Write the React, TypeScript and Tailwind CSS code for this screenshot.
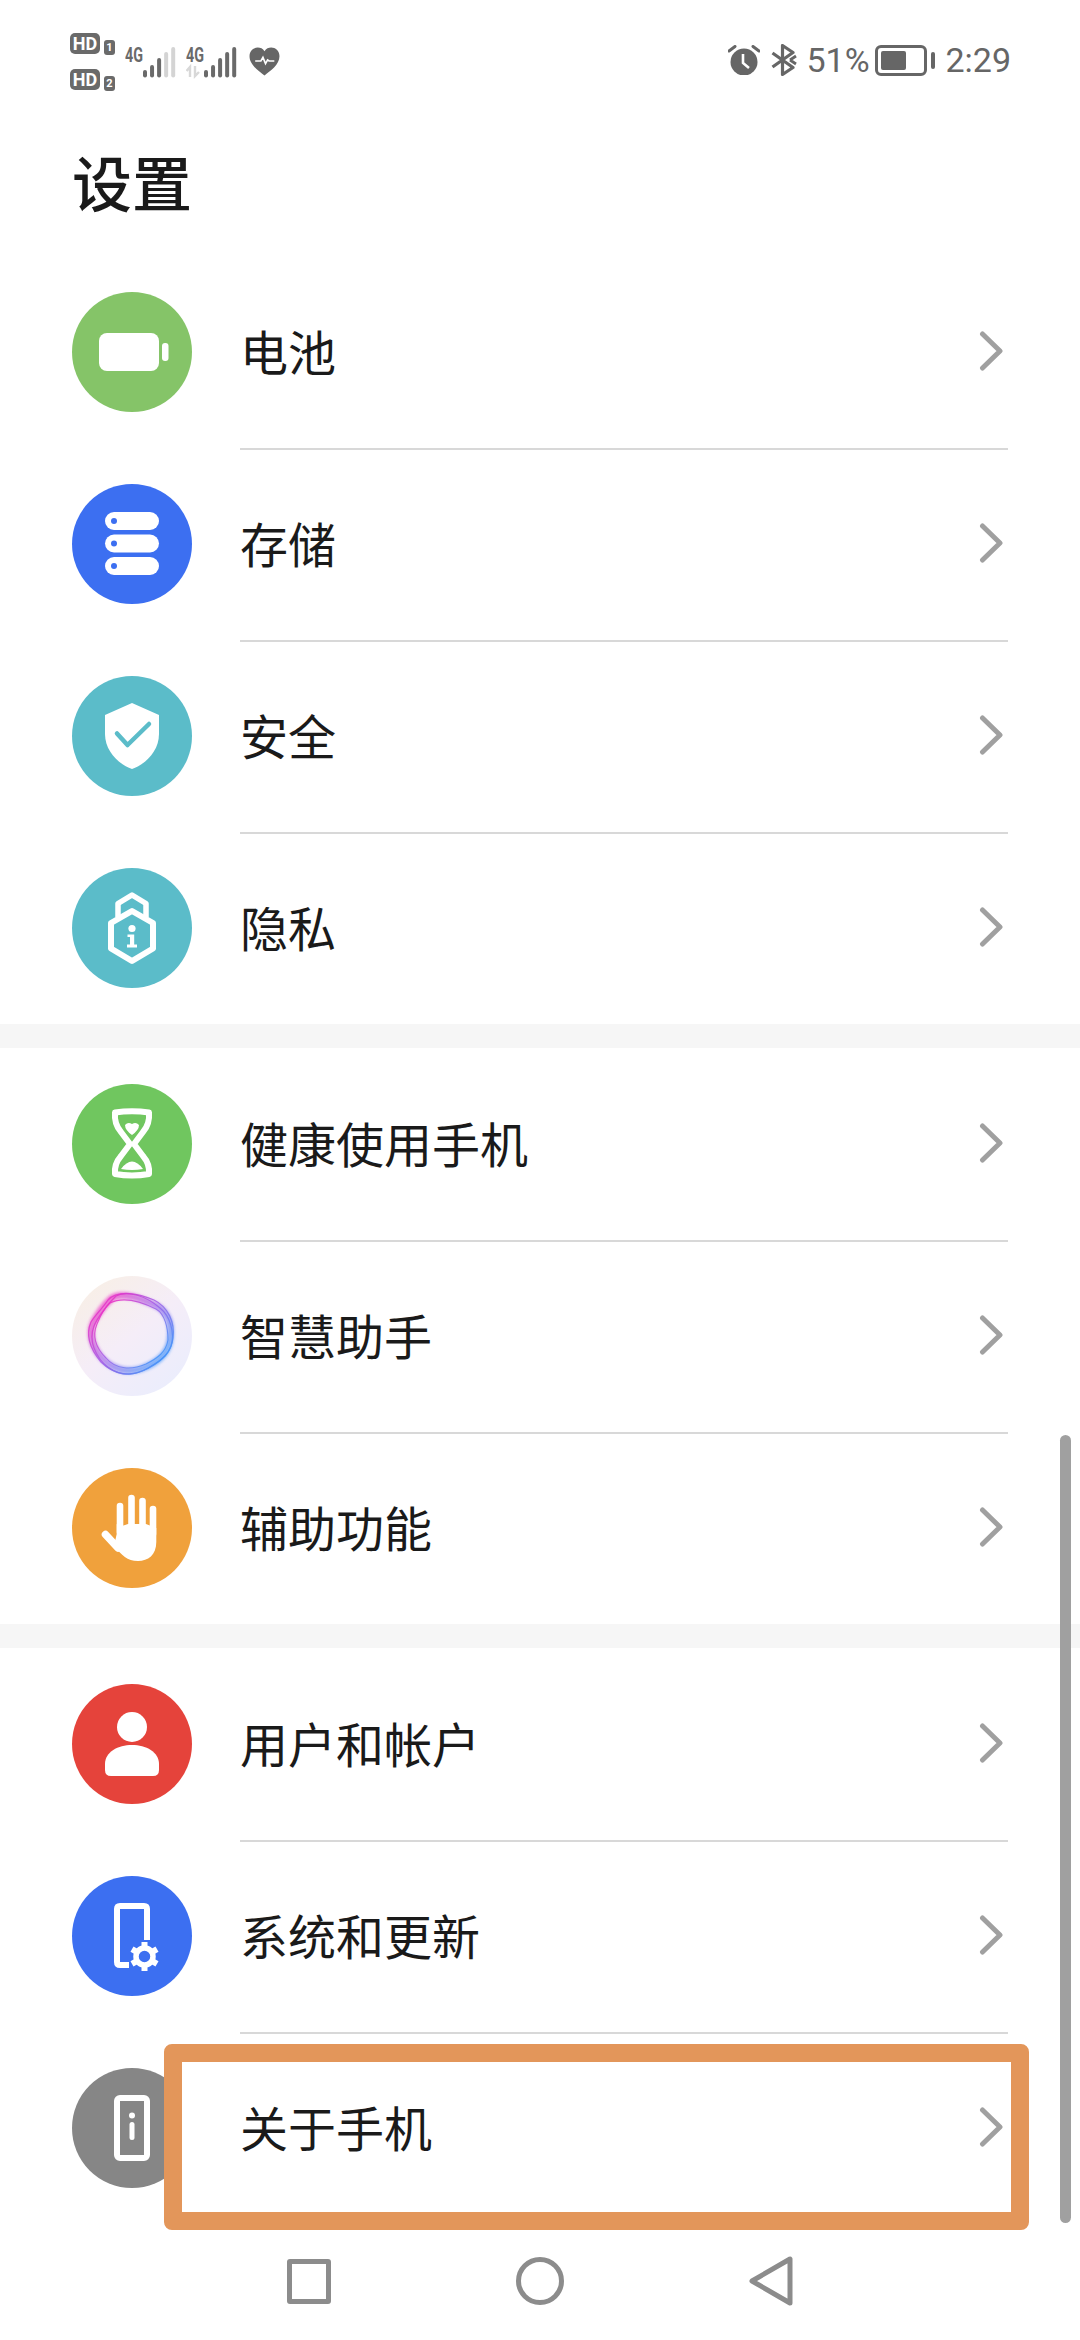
import React from "react";

const Circle = ({ bg, children }: { bg: string; children: React.ReactNode }) => (
  <svg viewBox="0 0 120 120" className="w-[120px] h-[120px] shrink-0 block">
    <circle cx="60" cy="60" r="60" fill={bg} />
    {children}
  </svg>
);

const Battery = () => (
  <Circle bg="#85c468">
    <rect x="27" y="41" width="60" height="38" rx="8" fill="#fff" />
    <rect x="90" y="51" width="6.5" height="18" rx="3" fill="#fff" />
  </Circle>
);

const Storage = () => (
  <Circle bg="#3c6ff1">
    {[28, 50.5, 73].map((y) => (
      <g key={y}>
        <rect x="33" y={y} width="54" height="18" rx="9" fill="#fff" />
        <circle cx="42" cy={y + 9} r="3" fill="#3c6ff1" />
      </g>
    ))}
  </Circle>
);

const Shield = () => (
  <Circle bg="#5bbcc9">
    <path d="M60 27 L87 39 V58 C87 76 72 89 60 93 C48 89 33 76 33 58 V39 Z" fill="#fff" />
    <path d="M45 57.5 L55.5 69 L77 48" fill="none" stroke="#5bbcc9" strokeWidth="4.5" strokeLinecap="round" strokeLinejoin="round" />
  </Circle>
);

const Privacy = () => (
  <Circle bg="#5bbcc9">
    <path d="M60 43 L81 55 V80.5 L60 93 L39 80.5 V55 Z" fill="none" stroke="#fff" strokeWidth="6" strokeLinejoin="round" />
    <path d="M46 49 V35.5 L60 27 L74 35.5 V49" fill="none" stroke="#fff" strokeWidth="5.5" strokeLinejoin="round" />
    <circle cx="60" cy="60.5" r="3.6" fill="#fff" />
    <path d="M55.5 66.5 H62.2 V76.5 H65 V79.5 H55 V76.5 H58 V69 H55.5 Z" fill="#fff" />
  </Circle>
);

const Hourglass = () => (
  <Circle bg="#70c65f">
    <path
      d="M43 28.5 Q60 26 77 28.5 Q78 40 71 48 L62 60 L71 72 Q78 80 77 90 Q60 93 43 90 Q42 80 49 72 L58 60 L49 48 Q42 40 43 28.5 Z"
      fill="none"
      stroke="#fff"
      strokeWidth="6"
      strokeLinejoin="round"
    />
    <path d="M53 41 Q56 37.5 60 40 Q64 37.5 67 41 Q67 46 60 51 Q53 46 53 41 Z" fill="#fff" />
    <path d="M49 85 Q60 70 71 85 Q60 87 49 85 Z" fill="#fff" />
  </Circle>
);

const Assistant = () => (
  <svg viewBox="0 0 120 120" className="w-[120px] h-[120px] shrink-0 block">
    <defs>
      <linearGradient id="bgA" x1="0.1" y1="0" x2="0.9" y2="1">
        <stop offset="0" stopColor="#f8efe4" />
        <stop offset="0.5" stopColor="#f5edf8" />
        <stop offset="1" stopColor="#e9edfd" />
      </linearGradient>
      <linearGradient id="ring" x1="0.1" y1="0.15" x2="0.9" y2="0.85">
        <stop offset="0" stopColor="#ec2fc4" />
        <stop offset="0.45" stopColor="#a45ce6" />
        <stop offset="1" stopColor="#3f97fa" />
      </linearGradient>
      <filter id="soft" x="-20%" y="-20%" width="140%" height="140%">
        <feGaussianBlur stdDeviation="1.8" />
      </filter>
    </defs>
    <circle cx="60" cy="60" r="60" fill="url(#bgA)" />
    <g fill="none" stroke="url(#ring)">
      <path filter="url(#soft)" strokeWidth="7" opacity="0.65" d="M40 22 C52 15 72 24 85 30 C97 37 100 50 98 64 C96 78 84 88 68 93 C54 97 40 93 30 82 C20 71 16 57 22 45 C27 36 33 28 40 22 Z" />
      <path strokeWidth="1.3" opacity="0.85" d="M36 24 C46 13 68 18 82 24 C96 31 103 46 101 62 C99 78 90 84 76 92 C60 102 42 99 29 86 C19 74 13 60 19 46 C24 38 30 33 36 24 Z" />
      <path strokeWidth="1.3" opacity="0.85" d="M44 20 C56 14 74 20 88 32 C98 40 103 56 99 70 C94 84 74 96 58 98 C42 99 28 88 22 72 C16 56 24 44 32 34 C36 28 40 24 44 20 Z" />
      <path strokeWidth="1.1" opacity="0.85" d="M38 27 C52 20 70 26 84 33 C93 38 96 52 96 64 C94 76 86 82 74 88 C60 94 44 94 34 82 C24 72 20 60 25 48 C29 38 32 32 38 27 Z" />
    </g>
  </svg>
);

const Hand = () => (
  <Circle bg="#f0a13c">
    <g stroke="#fff" strokeWidth="6.6" strokeLinecap="round" fill="none">
      <path d="M48 38 V64" />
      <path d="M59.5 30 V60" />
      <path d="M70.5 33 V60" />
      <path d="M81 41 V66" />
      <path d="M33.5 66.5 L46 80" strokeWidth="7.5" />
    </g>
    <path d="M44.7 56 L47 59 L56 56 H63 H74 L84.3 60 V74 C84.3 87 76 93 66 93 C55 93 50 87 42 78 L44.7 66 Z" fill="#fff" />
    <g stroke="#f0a13c" strokeWidth="1.6">
      <path d="M53.8 36 V56" />
      <path d="M65 36 V56" />
      <path d="M75.8 40 V56" />
    </g>
  </Circle>
);

const User = () => (
  <Circle bg="#e5433b">
    <circle cx="60" cy="43" r="15" fill="#fff" />
    <path d="M33 86 V80 C33 68 46 61 60 61 C74 61 87 68 87 80 V86 Q87 92 81 92 H39 Q33 92 33 86 Z" fill="#fff" />
  </Circle>
);

const System = () => (
  <Circle bg="#3c6ff1">
    <path d="M75 64 V33 Q75 30 72 30 H48 Q45 30 45 33 V86 Q45 89 48 89 H57" fill="none" stroke="#fff" strokeWidth="6" />
    <circle cx="72.5" cy="80.5" r="8.5" fill="none" stroke="#fff" strokeWidth="5.5" />
    <g stroke="#fff" strokeWidth="6">
      <path d="M72.5 66 V71" />
      <path d="M72.5 90 V95" />
      <path d="M60 73.2 L64.3 75.7" />
      <path d="M80.7 85.3 L85 87.8" />
      <path d="M60 87.8 L64.3 85.3" />
      <path d="M80.7 75.7 L85 73.2" />
    </g>
  </Circle>
);

const About = () => (
  <Circle bg="#868686">
    <rect x="45" y="30" width="30" height="60" rx="3" fill="none" stroke="#fff" strokeWidth="6" />
    <circle cx="60" cy="47.5" r="3" fill="#fff" />
    <rect x="57.5" y="54" width="5" height="18" rx="2.5" fill="#fff" />
  </Circle>
);

const Chevron = () => (
  <svg viewBox="0 0 24 40" className="w-[24px] h-[40px] block shrink-0">
    <path d="M3.5 3 L21 20 L3.5 37" fill="none" stroke="#a0a0a0" strokeWidth="5" strokeLinecap="round" strokeLinejoin="round" />
  </svg>
);

const Row = ({ icon, label, divider = true }: { icon: React.ReactNode; label: string; divider?: boolean }) => (
  <div className="flex items-center h-[192px] pl-[72px] pr-[72px] gap-[48px]">
    {icon}
    <div className={"flex-1 self-stretch -mb-[2px] flex items-center justify-between pr-[5px] border-b-2 " + (divider ? "border-[#d8d8d8]" : "border-transparent")}>
      <span className="text-[48px] leading-none text-[#1a1a1a] relative z-10 -mt-[4px]">{label}</span>
      <div className="relative z-10 -top-px">
        <Chevron />
      </div>
    </div>
  </div>
);

const Band = () => <div className="h-[24px] bg-[#f6f6f6]" />;

const HdRow = ({ n }: { n: string }) => (
  <div className="flex items-start gap-[4px]">
    <span className="w-[30px] h-[21px] rounded-[5px] bg-[#6a6a6a] text-white text-[18px] leading-[21px] font-bold text-center">HD</span>
    <span className="w-[11px] h-[15px] mt-[7px] rounded-[3px] bg-[#6a6a6a] text-white text-[11px] leading-[15px] font-bold text-center">{n}</span>
  </div>
);

const Signal = ({ lit, arrows }: { lit: number; arrows?: boolean }) => {
  const tops = [69, 64, 57, 51, 46];
  return (
    <svg viewBox="0 35 51 43" className="w-[51px] h-[43px] block shrink-0">
      <text x="0" y="61" fontSize="21" fontWeight="700" fill="#6a6a6a" textLength="18" lengthAdjust="spacingAndGlyphs" fontFamily="Roboto, sans-serif">4G</text>
      {arrows && <path d="M4 76 V66 L0.5 70 M9 65 V75 L13 71" fill="none" stroke="#d8d8d8" strokeWidth="2.4" />}
      {tops.map((t, i) => (
        <rect key={i} x={18 + i * 7.05} y={t} width="4" height={76.5 - t} rx="2" fill={i < lit ? "#6a6a6a" : "#d4d4d4"} />
      ))}
    </svg>
  );
};

const StatusBar = () => (
  <div className="h-[120px] flex items-center justify-between pl-[70px] pr-[69px] text-[#666666] text-[34px] leading-none" style={{ fontFamily: "Roboto, sans-serif" }}>
    <div className="flex items-center">
      <div className="flex flex-col gap-[14px] w-[55px] mt-[4px]" style={{ fontFamily: "Roboto, sans-serif" }}>
        <HdRow n="1" />
        <HdRow n="2" />
      </div>
      <div className="flex items-center mb-[5px]">
        <Signal lit={3} />
        <div className="w-[10px]" />
        <Signal lit={5} arrows />
      </div>
      <svg viewBox="0 0 30 28" className="w-[31px] h-[29px] ml-[12px] mt-[2px] block">
        <path d="M15 27.5 C9 23 0.5 17 0.5 9 C0.5 3.5 4.5 0.5 8.5 0.5 C11 0.5 13.5 1.5 15 4 C16.5 1.5 19 0.5 21.5 0.5 C25.5 0.5 29.5 3.5 29.5 9 C29.5 17 21 23 15 27.5 Z" fill="#666" />
        <path d="M6 13.5 H11.5 L13.5 10 L16 16 L18 12.5 L19.5 13.5 H24.5" fill="none" stroke="#fff" strokeWidth="1.6" />
      </svg>
    </div>
    <div className="flex items-center">
      <svg viewBox="0 0 32 30" className="w-[32px] h-[30px] block">
        <circle cx="16" cy="17" r="13.5" fill="#666" />
        <path d="M1 6 L7 1.5 M31 6 L25 1.5" stroke="#666" strokeWidth="3" strokeLinecap="round" />
        <path d="M15 9 V18 L21 23" fill="none" stroke="#fff" strokeWidth="2.6" />
      </svg>
      <svg viewBox="0 0 26 32" className="w-[26px] h-[32px] ml-[11px] block">
        <path d="M1.5 9 L22 23.5 L11.5 30.5 V1.5 L22 8.5 L1.5 23" fill="none" stroke="#666" strokeWidth="3.2" strokeLinejoin="round" />
        <path d="M19 16 L25 12 M19 16 L25 20" stroke="#666" strokeWidth="2.8" />
      </svg>
      <span className="ml-[9px] w-[63px]">51%</span>
      <div className="ml-[6px] w-[52px] h-[31px] border-[3px] border-[#666666] rounded-[6px] p-[3px] flex items-stretch">
        <div className="w-[25px] bg-[#666666] rounded-[2px]" />
      </div>
      <div className="ml-[4px] w-[4px] h-[17px] rounded-[2px] bg-[#666666]" />
      <span className="ml-[10px]">2:29</span>
    </div>
  </div>
);

export default function App() {
  return (
    <div className="relative w-[1080px] h-[2340px] bg-white overflow-hidden" style={{ fontFamily: '"Noto Sans CJK SC", sans-serif' }}>
      <StatusBar />
      <div className="h-[136px] pl-[72px] pt-[31px] text-[60px] leading-none font-medium text-[#1a1a1a]">设置</div>

      <Row icon={<Battery />} label="电池" />
      <Row icon={<Storage />} label="存储" />
      <Row icon={<Shield />} label="安全" />
      <Row icon={<Privacy />} label="隐私" divider={false} />
      <Band />
      <Row icon={<Hourglass />} label="健康使用手机" />
      <Row icon={<Assistant />} label="智慧助手" />
      <Row icon={<Hand />} label="辅助功能" divider={false} />
      <Band />
      <Row icon={<User />} label="用户和帐户" />
      <Row icon={<System />} label="系统和更新" />
      <div className="relative">
        <div className="absolute left-[164px] top-[12px] w-[865px] h-[186px] border-[18px] border-[#e3965a] rounded-[8px] bg-white z-[5]" />
        <Row icon={<About />} label="关于手机" divider={false} />
      </div>

      <div className="flex items-center h-[114px] pl-[287px] gap-[185px]">
        <div className="w-[44px] h-[45px] border-[5px] border-[#8c8c8c] rounded-[3px]" />
        <div className="w-[48px] h-[48px] border-[5px] border-[#8c8c8c] rounded-full" />
        <svg viewBox="0 0 44 50" className="w-[44px] h-[50px] block">
          <path d="M3 25 L41 3 V47 Z" fill="none" stroke="#8c8c8c" strokeWidth="5" strokeLinejoin="round" />
        </svg>
      </div>

      <div className="absolute left-[1060px] top-[1435px] w-[11px] h-[788px] rounded-[6px] bg-[#a0a0a0]" />
    </div>
  );
}
